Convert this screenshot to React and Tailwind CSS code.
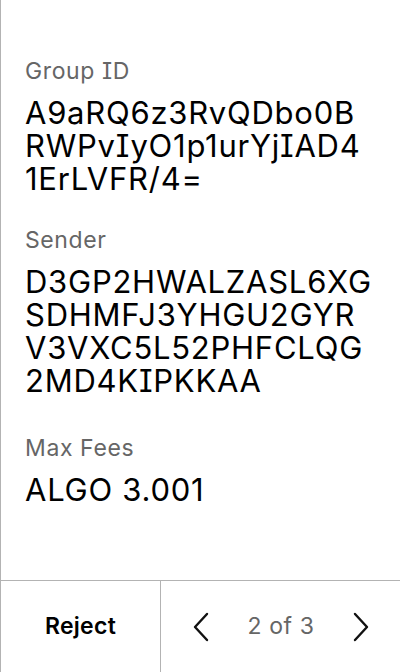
import React from 'react';

const Field = ({ label, lines, className = '' }) => (
    <div className={`flex flex-col ${className}`}>
        <span className="text-[23px] leading-[28px] tracking-[0.6px] text-[#666666]">{label}</span>
        <div className="mt-[11px] text-[31px] leading-[33px] tracking-[0.75px] text-black">
            {lines.map((line) => (
                <div key={line}>{line}</div>
            ))}
        </div>
    </div>
);

const Chevron = ({ dir }) => (
    <svg width="16" height="30" viewBox="0 0 16 30" fill="none" stroke="#111" strokeWidth="2.4" strokeLinecap="round" strokeLinejoin="round">
        {dir === 'left'
            ? <polyline points="14,2 2,15 14,28" />
            : <polyline points="2,2 14,15 2,28" />}
    </svg>
);

const App = () => {
    return (
        <div
            className="w-[400px] h-[672px] bg-white border-l border-[#b3b3b3] flex flex-col [font-feature-settings:'cv08']"
            style={{ fontFamily: 'Inter, "Noto Sans", sans-serif' }}
        >
            {/* Details */}
            <div className="flex-1 pl-6 pr-4 pt-[57px] flex flex-col">
                <Field label="Group ID" lines={['A9aRQ6z3RvQDbo0B', 'RWPvIyO1p1urYjIAD4', '1ErLVFR/4=']} />
                <Field className="mt-[31px]" label="Sender" lines={['D3GP2HWALZASL6XG', 'SDHMFJ3YHGU2GYR', 'V3VXC5L52PHFCLQG', '2MD4KIPKKAA']} />
                <Field className="mt-[37px]" label="Max Fees" lines={['ALGO 3.001']} />
            </div>

            {/* Footer */}
            <div className="h-[92px] border-t border-[#b3b3b3] flex">
                <button className="w-[160px] border-r border-[#b3b3b3] flex items-center justify-center text-[23px] font-semibold tracking-[0.3px] text-black">
                    Reject
                </button>
                <div className="flex-1 flex items-center justify-between pl-[32px] pr-[31px]">
                    <Chevron dir="left" />
                    <span className="text-[23px] tracking-[0.6px] text-[#666666]">2 of 3</span>
                    <Chevron dir="right" />
                </div>
            </div>
        </div>
    );
};

export default App;
